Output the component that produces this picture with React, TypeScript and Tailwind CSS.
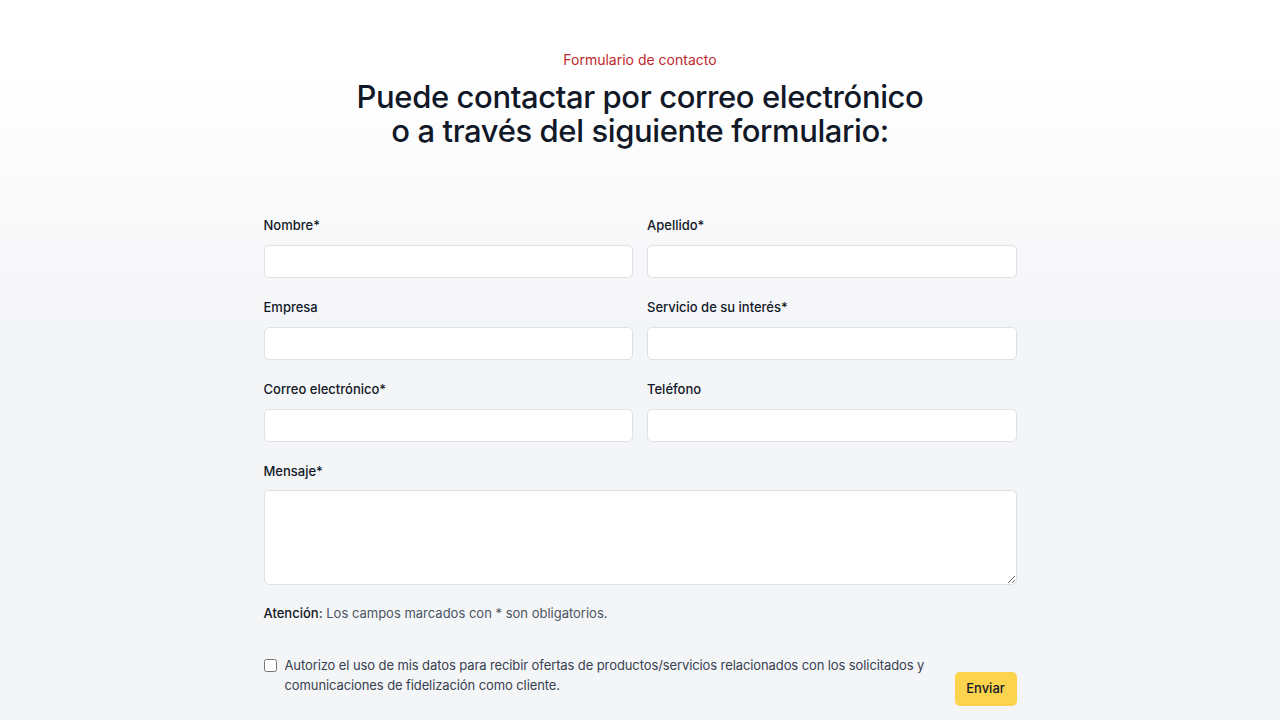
import * as React from "react"

const font = { fontFamily: "Inter, 'Noto Sans', sans-serif" }

const fields = [
  { name: "nombre", label: "Nombre*" },
  { name: "apellido", label: "Apellido*" },
  { name: "empresa", label: "Empresa" },
  { name: "servicio", label: "Servicio de su interés*" },
  { name: "correo", label: "Correo electrónico*" },
  { name: "telefono", label: "Teléfono" },
]

const Field = ({ label, name }: { label: string; name: string }) => (
  <div className="flex flex-col">
    <label htmlFor={name} className="text-[13px] font-medium leading-5 text-[#111827]">
      {label}
    </label>
    <input
      id={name}
      className="mt-[10px] h-[33px] w-full rounded-[5px] border border-[#dfe1e5] bg-white px-3 text-sm outline-none"
    />
  </div>
)

export default function App() {
  return (
    <div
      className="min-h-[720px] w-full bg-gradient-to-b from-white from-[10%] to-[#f4f5f7] to-[45%]"
      style={font}
    >
      <div className="mx-auto w-[753px] pt-[50px]">
        <p className="text-center text-sm text-[#c0272d]">Formulario de contacto</p>
        <h1 className="mt-[10px] text-center text-[31px] font-medium leading-[34px] tracking-[-0.4px] text-[#111827]">
          Puede contactar por correo electrónico
          <br />o a través del siguiente formulario:
        </h1>

        <form className="mt-[67px]">
          <div className="grid grid-cols-2 gap-x-[14px] gap-y-[19px]">
            {fields.map((f) => (
              <Field key={f.name} {...f} />
            ))}
          </div>
          <div className="mt-[19px] flex flex-col">
            <label htmlFor="mensaje" className="text-[13px] font-medium leading-5 text-[#111827]">
              Mensaje*
            </label>
            <textarea
              id="mensaje"
              className="mt-[9px] h-[95px] w-full rounded-[5px] border border-[#dfe1e5] bg-white px-3 py-2 text-sm outline-none"
            />
          </div>
          <p className="mt-[18px] text-[13px] leading-5 text-[#4b5563]">
            <span className="font-medium text-[#111827]">Atención:</span> Los campos marcados con * son obligatorios.
          </p>
          <div className="mt-[32px] flex items-start justify-between">
            <label className="flex items-start gap-2 text-[13px] leading-5 text-[#374151]">
              <input type="checkbox" className="mt-[4px] h-[13px] w-[13px] shrink-0" />
              <span className="whitespace-nowrap tracking-[-0.1px]">
                Autorizo el uso de mis datos para recibir ofertas de productos/servicios relacionados con los solicitados y
                <br />
                comunicaciones de fidelización como cliente.
              </span>
            </label>
            <button
              type="button"
              className="mt-[17px] h-[34px] w-[62px] shrink-0 rounded-[5px] bg-[#fbd34d] text-[13px] font-medium text-[#111827]"
            >
              Enviar
            </button>
          </div>
        </form>
      </div>
    </div>
  )
}
